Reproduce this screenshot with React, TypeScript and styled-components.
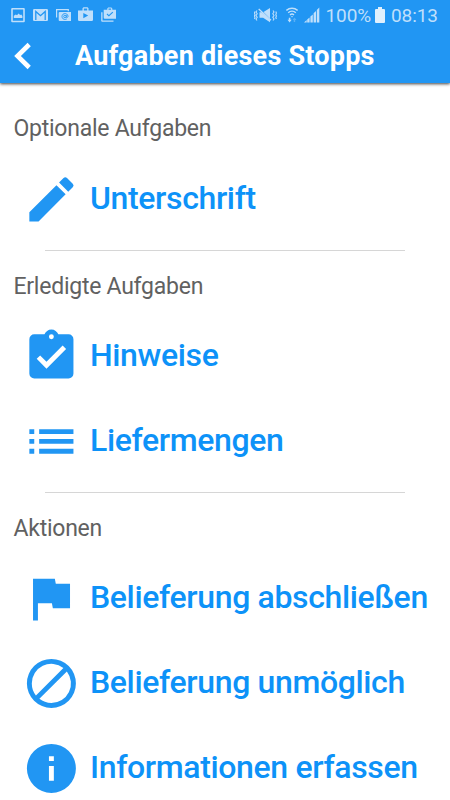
import React from 'react';
import styled, { createGlobalStyle } from 'styled-components';

const GlobalStyle = createGlobalStyle`
  * { box-sizing: border-box; }
  body { margin: 0; background: #fff; font-family: Roboto, "Liberation Sans", sans-serif; }
`;

const Screen = styled.div`
  width: 450px;
  height: 800px;
  overflow: hidden;
  background: #fff;
`;

const Header = styled.header`
  height: 83px;
  background: #2196f3;
  box-shadow: 0 1px 3px rgba(0, 0, 0, 0.75);
`;

const StatusBar = styled.div`
  height: 30px;
  padding: 0 12px 0 11px;
  display: flex;
  align-items: center;
  justify-content: space-between;
  color: #bfdffb;
`;

const Notifications = styled.div`
  display: flex;
  align-items: center;
`;

const Indicators = styled.div`
  display: flex;
  align-items: center;
`;

const StatusIcon = styled.svg<{ $w: number; $gap?: number }>`
  display: block;
  flex: none;
  width: ${(p) => p.$w}px;
  height: 16px;
  margin-right: ${(p) => p.$gap ?? 0}px;
  fill: currentColor;
`;

const StatusText = styled.span<{ $w: number; $gap?: number }>`
  width: ${(p) => p.$w}px;
  margin-right: ${(p) => p.$gap ?? 0}px;
  padding-top: 1px;
  font-size: 19px;
  line-height: 30px;
  letter-spacing: -0.1px;
  white-space: nowrap;
`;

const TitleBar = styled.div`
  height: 53px;
  display: flex;
  align-items: center;
  padding-left: 14px;
`;

const BackButton = styled.button`
  width: 61px;
  height: 53px;
  padding: 0 0 1px;
  border: 0;
  background: none;
  display: flex;
  align-items: center;
`;

const Title = styled.h1`
  margin: 0;
  color: #fff;
  font-size: 27px;
  letter-spacing: 0.22px;
  font-weight: 700;
  line-height: 51px;
  white-space: nowrap;
`;

const Section = styled.section`
  & + &::before {
    content: '';
    display: block;
    width: 360px;
    height: 1px;
    margin: 8.4px 45px 0;
    background: #d6d6d6;
  }
`;

const SectionTitle = styled.h2<{ $height: number; $top: number }>`
  margin: 0;
  height: ${(p) => p.$height}px;
  padding: ${(p) => p.$top}px 0 0 13.5px;
  color: #616161;
  font-size: 23px;
  letter-spacing: -0.25px;
  font-weight: 400;
  line-height: 30px;
  white-space: nowrap;
`;

const TaskRow = styled.div`
  height: 85px;
  padding-left: 22.2px;
  display: flex;
  align-items: center;
`;

const TaskIcon = styled.svg`
  display: block;
  flex: none;
  width: 58.8px;
  height: 58.8px;
  fill: #2196f3;
`;

const TaskLabel = styled.span`
  margin-left: 9px;
  padding-bottom: 1.6px;
  color: #0d92f8;
  font-size: 32px;
  letter-spacing: -0.36px;
  font-weight: 500;
  line-height: 40px;
  white-space: nowrap;
`;

const icons = {
  edit: 'M3 17.25V21h3.75L17.81 9.94l-3.75-3.75L3 17.25zM20.71 7.04a1 1 0 0 0 0-1.41l-2.34-2.34a1 1 0 0 0-1.41 0l-1.83 1.83 3.75 3.75 1.83-1.83z',
  clipboard:
    'M19 3h-4.18C14.4 1.84 13.3 1 12 1s-2.4.84-2.82 2H5a2 2 0 0 0-2 2v14a2 2 0 0 0 2 2h14a2 2 0 0 0 2-2V5a2 2 0 0 0-2-2zm-7 0a1 1 0 1 1 0 2 1 1 0 0 1 0-2zm-2 14l-4-4 1.41-1.41L10 14.17l6.59-6.59L18 9l-8 8z',
  list: 'M3 13h2v-2H3v2zm0 4h2v-2H3v2zm0-8h2V7H3v2zm4 4h14v-2H7v2zm0 4h14v-2H7v2zM7 7v2h14V7H7z',
  flag: 'M13.8 6l-.4-2H4.5v17h2v-7h5.7l.4 2h7V6z',
  block:
    'M12 2a10 10 0 1 0 0 20 10 10 0 0 0 0-20zM4 12a8 8 0 0 1 12.9-6.31L5.69 16.9A7.9 7.9 0 0 1 4 12zm8 8a7.9 7.9 0 0 1-4.9-1.69L18.31 7.1A8 8 0 0 1 12 20z',
  info: 'M12 2a10 10 0 1 0 0 20 10 10 0 0 0 0-20zm1 15h-2v-6h2v6zm0-8h-2V7h2v2z',
};

type IconName = keyof typeof icons;

interface SectionData {
  title: string;
  height: number;
  top: number;
  tasks: { icon: IconName; label: string }[];
}

const sections: SectionData[] = [
  { title: 'Optionale Aufgaben', height: 73.6, top: 31, tasks: [{ icon: 'edit', label: 'Unterschrift' }] },
  {
    title: 'Erledigte Aufgaben',
    height: 62.8,
    top: 21,
    tasks: [
      { icon: 'clipboard', label: 'Hinweise' },
      { icon: 'list', label: 'Liefermengen' },
    ],
  },
  {
    title: 'Aktionen',
    height: 62.4,
    top: 20.8,
    tasks: [
      { icon: 'flag', label: 'Belieferung abschließen' },
      { icon: 'block', label: 'Belieferung unmöglich' },
      { icon: 'info', label: 'Informationen erfassen' },
    ],
  },
];

function NotificationIcons() {
  return (
    <Notifications>
      <StatusIcon $w={14} $gap={8} viewBox="0 0 14 16">
        <path fillRule="evenodd" d="M1.2 1h11.600a1 1 0 0 1 1 1v12.300a1 1 0 0 1-1 1H1.200a1 1 0 0 1-1-1V2a1 1 0 0 1 1-1zM1.800 2.500v11.300h10.400V2.500zM2.800 11V8.800l2-1.300 1.200.7L7.500 6.500 9.200 8l1-.5 1.200 1.500V11z" />
      </StatusIcon>
      <StatusIcon $w={15} $gap={7.5} viewBox="0 0 15 16">
        <rect x="0" y="2" width="15" height="12" rx="1.200" />
        <path d="M2.800 13V4.500l4.700 4.200 4.700-4.200V13" fill="none" stroke="#2196f3" strokeWidth="1.300" />
      </StatusIcon>
      <StatusIcon $w={15.5} $gap={7} viewBox="0 0 15.5 16">
        <path d="M.6 10.500V2.700h11.700v1.500" fill="none" stroke="currentColor" strokeWidth="1.200" />
        <rect x="2.700" y="5" width="12.800" height="9" rx="1" />
        <g fill="none" stroke="#2196f3" strokeWidth=".9">
          <circle cx="9" cy="9.500" r="1.300" />
          <path d="M10.300 8.200v1.500c0 1.300 1.700 1 1.700-.4a3 3 0 1 0-1.200 2.600" />
        </g>
      </StatusIcon>
      <StatusIcon $w={15} $gap={7.5} viewBox="0 0 15 16">
        <path fillRule="evenodd" d="M4.500 3.500V1.300l1-1h4l1 1v2.200H15v9.300a1.300 1.300 0 0 1-1.300 1.300H1.300A1.300 1.300 0 0 1 0 12.800V3.500zM5.800 3.500h3.400V1.600H5.800zM5.300 6v5.200L10.200 8.600z" />
      </StatusIcon>
      <StatusIcon $w={15.5} viewBox="0 0 15.5 16">
        <path d="M.2 5.200h1.300v8.300h11v1.300H1.200a1 1 0 0 1-1-1z" />
        <path fillRule="evenodd" d="M6.300 2.800V1.400l.9-.9h3.200l.9.900v1.400h4.200v7.800a1.200 1.200 0 0 1-1.200 1.200H3.900a1.200 1.200 0 0 1-1.200-1.200V2.800zM7.500 2.800h2.600V1.600H7.500zM6.400 6.600l-.8.800 2.300 2.200 4.300-4.100-.8-.8-3.500 3.300z" />
      </StatusIcon>
    </Notifications>
  );
}

function SystemIndicators() {
  return (
    <Indicators>
      <StatusIcon $w={23} $gap={9} viewBox="0 0 23 16">
        <path d="M9.500 5L16 1v10.500z" />
        <path d="M5.500 5.200v5.600h3.600l6.900 4.400v-2.600L7.500 5.200z" />
        <path d="M4.700 2L17 13.200" stroke="currentColor" strokeWidth="1.300" />
        <g fill="none" stroke="currentColor" strokeWidth="1.100">
          <path d="M3 3.500l-1 1.500 1.200 1.800L2 8.500l1.200 1.800L2 12l1 1.500M1 4.500L.4 6 1 7.500.4 9l.6 1.500-.6 1.500M19 3.500L20 5l-1.200 1.800L20 8.500l-1.200 1.800L20 12l-1 1.500M21.800 4.500l.6 1.500-.6 1.500.6 1.500-.6 1.500.6 1.500" />
        </g>
      </StatusIcon>
      <StatusIcon $w={12} $gap={6} viewBox="0 0 12 16">
        <g fill="none" stroke="currentColor" strokeWidth="1.400">
          <path d="M.4 3.400a8.500 8.500 0 0 1 11.200 0M2.200 5.700a5.700 5.700 0 0 1 7.600 0M4 7.900a3 3 0 0 1 4 0" />
        </g>
        <path d="M4.800 9.200h2.400L6 10.500z" />
        <path d="M2.800 10.800h1.600v2h1.300l-2.100 2.700-2.100-2.700h1.300z" />
        <path d="M7.700 15V13H6.500l2-2.500 2 2.500H9.200v2z" opacity=".35" />
      </StatusIcon>
      <StatusIcon $w={16} $gap={5.5} viewBox="0 0 16 16">
        <path d="M0 15.500L2.700 13v2.500zM3.200 12.500l2.400-2v5H3.200zM6.400 9.600l2.400-2.200v8.100H6.400zM9.600 6.300L12 4v11.500H9.600zM12.800 3l2.500-2.500v15h-2.500z" />
      </StatusIcon>
      <StatusText $w={45.5} $gap={4}>100%</StatusText>
      <StatusIcon $w={10} $gap={6} viewBox="0 0 10 16">
        <path fill="#e0f0fd" d="M3 0h4v2h2.300l.7.700V15.300l-.7.700H.7L0 15.300V2.700L.7 2H3z" />
      </StatusIcon>
      <StatusText $w={47}>08:13</StatusText>
    </Indicators>
  );
}

export default function App() {
  return (
    <Screen>
      <GlobalStyle />
      <Header>
        <StatusBar>
          <NotificationIcons />
          <SystemIndicators />
        </StatusBar>
        <TitleBar>
          <BackButton aria-label="Zurück">
            <svg width="18" height="28" viewBox="0 0 18 28">
              <path d="M15.200 2.500L3.500 14l11.700 11.500" fill="none" stroke="#fff" strokeWidth="4.600" />
            </svg>
          </BackButton>
          <Title>Aufgaben dieses Stopps</Title>
        </TitleBar>
      </Header>
      <main>
        {sections.map((section) => (
          <Section key={section.title}>
            <SectionTitle $height={section.height} $top={section.top}>
              {section.title}
            </SectionTitle>
            {section.tasks.map((task) => (
              <TaskRow key={task.label}>
                <TaskIcon viewBox="0 0 24 24">
                  <path d={icons[task.icon]} />
                </TaskIcon>
                <TaskLabel>{task.label}</TaskLabel>
              </TaskRow>
            ))}
          </Section>
        ))}
      </main>
    </Screen>
  );
}
